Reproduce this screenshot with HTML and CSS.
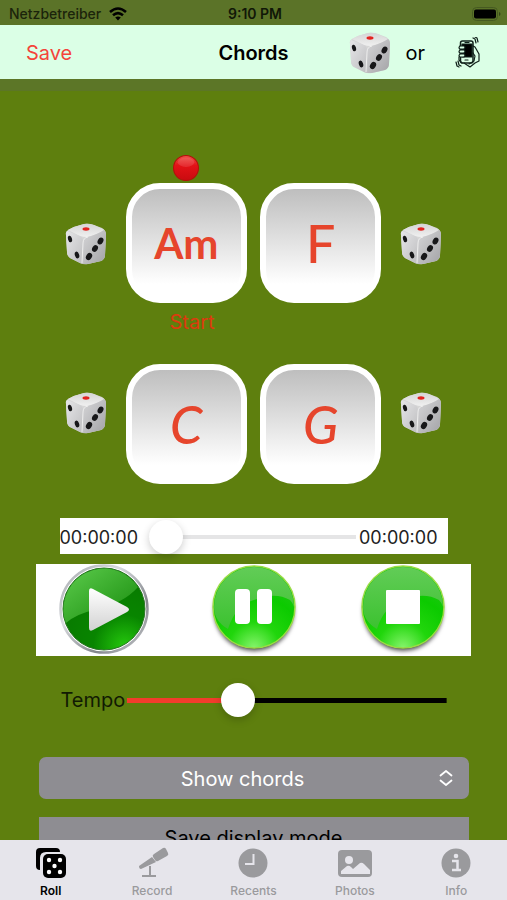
FILE: index.html
```html
<!DOCTYPE html>
<html lang="en">
<head>
<meta charset="utf-8">
<meta name="viewport" content="width=device-width, initial-scale=1">
<title>Chords</title>
<link rel="stylesheet" href="styles.css">
</head>
<body>
<svg class="defs" aria-hidden="true">
  <defs>
    <linearGradient id="dieTop" x1="0" y1="0" x2="0" y2="1"><stop offset="0" stop-color="#d4d4d4"/><stop offset="1" stop-color="#f0f0f0"/></linearGradient>
    <linearGradient id="dieLeft" x1="0" y1="0" x2="1" y2="1"><stop offset="0" stop-color="#e6e6e8"/><stop offset="1" stop-color="#bcbcbe"/></linearGradient>
    <linearGradient id="dieRight" x1="0" y1="0" x2="1" y2="1"><stop offset="0" stop-color="#d6d6d8"/><stop offset="1" stop-color="#a3a3a6"/></linearGradient>
    <linearGradient id="record" x1="0" y1="0" x2="0" y2="1"><stop offset="0" stop-color="#ee4f48"/><stop offset=".4" stop-color="#e31217"/><stop offset="1" stop-color="#c90b10"/></linearGradient>
    <linearGradient id="ring" x1="0" y1="0" x2="1" y2="1"><stop offset="0" stop-color="#a2a5aa"/><stop offset=".35" stop-color="#d9dbdf"/><stop offset=".7" stop-color="#83868c"/><stop offset="1" stop-color="#cfd1d4"/></linearGradient>
    <radialGradient id="playFill" cx=".75" cy=".95" r=".95"><stop offset="0" stop-color="#25c70d"/><stop offset=".4" stop-color="#088500"/><stop offset="1" stop-color="#087600"/></radialGradient>
    <linearGradient id="playGloss" x1="0" y1="0" x2="1" y2="1"><stop offset="0" stop-color="#5dcc4d"/><stop offset="1" stop-color="#168a0b"/></linearGradient>
    <linearGradient id="arrow" x1="0" y1="0" x2="0" y2="1"><stop offset="0" stop-color="#fff"/><stop offset="1" stop-color="#d2d2d2"/></linearGradient>
    <radialGradient id="greenFill" cx=".5" cy="1" r=".9"><stop offset="0" stop-color="#86f46c"/><stop offset=".35" stop-color="#21d60c"/><stop offset=".7" stop-color="#0cca00"/><stop offset="1" stop-color="#20c816"/></radialGradient>
    <linearGradient id="greenGloss" x1="0" y1="0" x2="0" y2="1"><stop offset="0" stop-color="#62cc57"/><stop offset="1" stop-color="#3cc230"/></linearGradient>
  </defs>
  <symbol id="die" viewBox="0 0 42 42">
    <path d="M3 7Q10 3 19 1Q23 0 29 2L37 5Q41 7 41 12L40 32Q40 36 36 38L23 41Q19 42 15 40L5 35Q2 33 2 29L1 12Q0 9 3 7Z" fill="#d6d6d6"/>
    <path d="M3 7Q10 3 19 1Q23 0 29 2L39 7Q34 11 22 14Q18 14 15 13Z" fill="url(#dieTop)"/>
    <path d="M2 8L15 13Q18 14 18 19L19 41Q16 41 13 39L5 35Q2 33 2 29L1 12Q1 9 2 8Z" fill="url(#dieLeft)"/>
    <path d="M39 7Q41 8 41 12L40 32Q40 36 36 38L23 41H19L18 20Q18 15 23 14Q33 11 39 7Z" fill="url(#dieRight)"/>
    <path d="M17 40L18 20Q18 15 23 14" fill="none" stroke="#eee" stroke-width="1"/>
    <ellipse cx="21" cy="6" rx="3.5" ry="1.7" fill="#e3231f"/>
    <g fill="#171719"><ellipse cx="5" cy="16" rx="2" ry="3.3" transform="rotate(-15 5 16)"/><ellipse cx="12" cy="32" rx="2.1" ry="3.5" transform="rotate(-18 12 32)"/><ellipse cx="35.5" cy="18" rx="2.7" ry="3.7" transform="rotate(28 35.5 18)"/><ellipse cx="30" cy="25.5" rx="2.7" ry="3.6" transform="rotate(32 30 25.5)"/><ellipse cx="24" cy="33.5" rx="2.8" ry="3.8" transform="rotate(32 24 33.5)"/></g>
  </symbol>
</svg>

<div class="status">
  <span class="carrier">Netzbetreiber
    <svg width="18" height="14" viewBox="0 0 18 14" fill="none" stroke="#000" stroke-width="2.6"><path d="M1 5Q9-2 17 5M4 8.300Q9 4 14 8.300"/><path d="M6.200 10.500Q9 8.500 11.800 10.500L9 13.500Z" fill="#000" stroke="none"/></svg>
  </span>
  <time>9:10 PM</time>
  <svg class="battery" width="29" height="14" viewBox="0 0 29 14"><rect x=".5" y=".5" width="25" height="13" rx="4" fill="none" stroke="#465a21"/><rect x="2" y="2.500" width="22" height="9" rx="2" fill="#000"/><path d="M27 5v4q1.500-.5 1.500-2T27 5Z" fill="#354618"/></svg>
</div>

<header class="nav">
  <button class="save">Save</button>
  <h1>Chords</h1>
  <div class="nav-actions">
    <button aria-label="Roll all"><svg width="42" height="42"><use href="#die"/></svg></button>
    <span>or</span>
    <button class="shake" aria-label="Shake to roll">
      <svg width="26" height="32" viewBox="0 0 26 32" fill="none" stroke="#10201a" stroke-width="1.200" stroke-linecap="round" stroke-linejoin="round"><rect x="5.500" y="4" width="12.500" height="22" rx="2" stroke-width="1.500"/><path d="M7 7h10v13H7Z" fill="#000"/><path d="M10 5.500h4M10 23h3"/><path d="M18 9l2 1 4 7v7l-4 2-5 4-6-4M18 16l2 3-1 5-5 3"/><path d="M5 9h4q2 1 0 3H5q-2-1 0-3M5 13h4q2 1 0 3H5q-2-1 0-3M5 17h4q2 1 0 3H5q-2-1 0-3" fill="#dbffe6"/><path d="M4 20v3l3 3"/><path d="M18 1l2 1 1 4M20 0l2 1 1 4M1 25l1 4 2 1M3 24l1 4 2 1"/></svg>
    </button>
  </div>
</header>

<main>
  <section class="pads" aria-label="Chord pads">
    <svg class="marker" viewBox="0 0 25 25" aria-label="Current chord"><circle cx="12.500" cy="12.500" r="12" fill="url(#record)" stroke="#b2100b"/><ellipse cx="12.500" cy="7" rx="8" ry="4.500" fill="#fff" opacity=".12"/></svg>
    <div class="pad-row">
      <button class="roll" aria-label="Roll first chord"><svg viewBox="0 0 42 42"><use href="#die"/></svg></button>
      <button class="pad minor">Am</button>
      <button class="pad">F</button>
      <button class="roll" aria-label="Roll second chord"><svg viewBox="0 0 42 42"><use href="#die"/></svg></button>
    </div>
    <p class="start">Start</p>
    <div class="pad-row lower">
      <button class="roll" aria-label="Roll third chord"><svg viewBox="0 0 42 42"><use href="#die"/></svg></button>
      <button class="pad script">C</button>
      <button class="pad script">G</button>
      <button class="roll" aria-label="Roll fourth chord"><svg viewBox="0 0 42 42"><use href="#die"/></svg></button>
    </div>
  </section>

  <div class="timeline">
    <span>00:00:00</span>
    <input type="range" min="0" max="100" value="0" aria-label="Playback position">
    <span>00:00:00</span>
  </div>

  <div class="player">
    <button aria-label="Play">
      <svg width="92" height="92" viewBox="0 0 92 92"><circle cx="46" cy="45" r="43.500" fill="#fff" stroke="url(#ring)" stroke-width="2.500"/><circle cx="46" cy="45" r="41" fill="url(#playFill)" stroke="#2a7425"/><path d="M5.500 45A40.500 40.500 0 0 1 80 23Q65 40 36 46Q18 50 8 59Q5 52 5.500 45Z" fill="url(#playGloss)"/><path d="M31 27q0-4 4-2L69 43q4 2.500 0 5L35 66q-4 2-4-2Z" fill="url(#arrow)"/></svg>
    </button>
    <button aria-label="Pause">
      <svg width="92" height="92" viewBox="0 0 92 92"><circle class="shade" cx="46" cy="45" r="40"/><circle cx="46" cy="43" r="41" fill="url(#greenFill)" stroke="#9bdc45" stroke-width="1.500"/><path d="M6 43a40 40 0 0 1 80 0Q85 39 82 36Q68 28 49 35Q27 41 20 65Q6 57 6 43Z" fill="url(#greenGloss)"/><rect x="27" y="25" width="15" height="35" rx="4" fill="#fff"/><rect x="49" y="25" width="15" height="35" rx="4" fill="#fff"/></svg>
    </button>
    <button aria-label="Stop">
      <svg width="92" height="92" viewBox="0 0 92 92"><circle class="shade" cx="46" cy="45" r="40"/><circle cx="46" cy="43" r="41" fill="url(#greenFill)" stroke="#9bdc45" stroke-width="1.500"/><path d="M6 43a40 40 0 0 1 80 0Q85 39 82 36Q68 28 49 35Q27 41 20 65Q6 57 6 43Z" fill="url(#greenGloss)"/><rect x="29" y="26" width="34" height="34" rx="1" fill="#fff"/></svg>
    </button>
  </div>

  <div class="tempo">
    <label for="tempo">Tempo</label>
    <input id="tempo" type="range" min="0" max="100" value="33">
  </div>

  <div class="display">
    <select aria-label="Display mode"><option>Show chords</option></select>
    <svg width="14" height="18" viewBox="0 0 14 18" fill="none" stroke="#fff" stroke-width="1.800" stroke-linecap="round" stroke-linejoin="round"><path d="M1.500 6.500L7 2l5.500 4.500M1.500 11.500L7 16l5.500-4.500"/></svg>
  </div>
  <button class="save-mode">Save display mode</button>
</main>

<nav class="tabs" aria-label="Sections">
  <a href="#roll" class="active" aria-current="page">
    <svg viewBox="0 0 34 34"><path d="M6 2h16q4 0 4 4H12q-6 0-6 6v12q-4 0-4-4V6q0-4 4-4Z" fill="currentColor"/><rect x="9" y="8" width="23" height="24" rx="5" fill="currentColor"/><g fill="#fff"><circle cx="15" cy="14" r="2.200"/><circle cx="26" cy="14" r="2.200"/><circle cx="20.500" cy="20" r="2.200"/><circle cx="15" cy="26" r="2.200"/><circle cx="26" cy="26" r="2.200"/></g></svg>
    Roll
  </a>
  <a href="#record">
    <svg viewBox="0 0 34 34"><path d="M19 8l9-6q2-1 3 1l2 4q1 2-1 3l-9 5q-2 1-3-1l-2-3q-1-2 1-3ZM17 11l4 5L6 23q-2 0-2-3ZM14 20h2v9h5v2H7v-2h7Z" fill="currentColor"/></svg>
    Record
  </a>
  <a href="#recents">
    <svg viewBox="0 0 34 34"><circle cx="17" cy="17" r="14.500" fill="currentColor"/><path d="M17.500 8v10H9" fill="none" stroke="#e6e5eb" stroke-width="2"/></svg>
    Recents
  </a>
  <a href="#photos">
    <svg viewBox="0 0 34 34"><rect width="34" height="27" y="4" rx="4" fill="currentColor"/><circle cx="11" cy="14" r="4" fill="#e6e5eb"/><path d="M3 28v-3l6-5q2-1 4 1l2 2 7-6q2-1 4 1l6 6v4Z" fill="#e6e5eb"/></svg>
    Photos
  </a>
  <a href="#info">
    <svg viewBox="0 0 34 34"><circle cx="17" cy="17" r="14.500" fill="currentColor"/><circle cx="17" cy="10" r="2.300" fill="#e6e5eb"/><path d="M13 15h5.500v9H22M13 24h6" fill="none" stroke="#e6e5eb" stroke-width="2.500"/></svg>
    Info
  </a>
</nav>
</body>
</html>
```
FILE: styles.css
```css
* { box-sizing: border-box; }

body {
  margin: 0;
  height: 100vh;
  display: flex;
  flex-direction: column;
  overflow: hidden;
  background: #5e7f0e;
  color: #000;
  font-family: Inter, "Liberation Sans", sans-serif;
}

button, select, input { font: inherit; color: inherit; }
button { border: 0; padding: 0; background: none; }
svg { display: block; flex: none; }
.defs { position: absolute; width: 0; height: 0; }

.status {
  display: grid;
  grid-template-columns: 1fr auto 1fr;
  align-items: center;
  flex: none;
  height: 25px;
  padding: 2px 6px 0 9px;
  background: #5b7328;
  font-size: 14px;
}
.carrier { display: flex; align-items: center; gap: 8px; color: #1b240b; font-weight: 500; }
.status time { font-weight: 600; color: #111707; }
.battery { justify-self: end; }

.nav {
  display: grid;
  grid-template-columns: 1fr auto 1fr;
  align-items: center;
  flex: none;
  height: 54px;
  padding: 1px 26px 0;
  background: #dbffe6;
}
.nav h1 { margin: 0; font-size: 20px; font-weight: 600; }
.save { justify-self: start; color: #f4443a; font-size: 20px; }
.nav-actions { display: flex; align-items: center; justify-self: end; gap: 14px; font-size: 20px; }
.shake { margin-left: 16px; }

main {
  flex: 1;
  min-height: 0;
  overflow: hidden;
  display: flex;
  flex-direction: column;
  align-items: center;
  border-top: 12px solid #5c7627;
}
main > * { flex: none; }

.pads { margin-top: 64px; width: 378px; }
.marker { width: 26px; height: 26px; margin: 0 0 2px 108px; }
.pad-row {
  display: grid;
  grid-template-columns: 48px 121px 121px 48px;
  justify-content: space-between;
  align-items: center;
}
.roll { padding-top: 2px; }
.roll svg { width: 42px; height: 42px; }
.roll:last-child svg { margin-left: auto; }
.lower .roll { padding-bottom: 24px; }
.pad {
  height: 120px;
  border: 6px solid #fff;
  border-radius: 34px;
  background: linear-gradient(#bebebe, #fff 88%);
  color: #e6452c;
  font-family: "Chalkboard SE", Lato, sans-serif;
  font-size: 52px;
  font-weight: 500;
  line-height: 60px;
}
.minor { font-size: 42px; font-weight: 700; }
.script { font-family: "Bradley Hand", Lato, sans-serif; font-style: italic; }
.start {
  width: 121px;
  margin: 6px 0 0 67px;
  height: 55px;
  line-height: 26px;
  text-align: center;
  color: #dc3b0d;
  font-size: 20px;
}

input[type="range"] {
  appearance: none;
  flex: 1;
  min-width: 0;
  height: 34px;
  margin: 0;
  background: linear-gradient(#e5e5e6, #e5e5e6) center / 100% 4px no-repeat;
}
input[type="range"]::-webkit-slider-thumb {
  appearance: none;
  width: 34px;
  height: 34px;
  border-radius: 50%;
  background: #fff;
  box-shadow: 0 3px 8px rgba(0, 0, 0, .2);
}

.timeline {
  display: flex;
  align-items: center;
  width: calc(100% - 119px);
  height: 36px;
  margin-top: 34px;
  padding: 2px 10px 0 0;
  background: #fff;
  color: #222;
  font-size: 18px;
}
.timeline input { margin: 0 3px 0 11px; }

.player {
  display: flex;
  justify-content: space-between;
  width: calc(100% - 72px);
  height: 92px;
  margin-top: 10px;
  padding: 0 22px;
  background: #fff;
}
.shade { fill: #555; filter: drop-shadow(0 2px 2px #555); }

.tempo {
  display: flex;
  align-items: center;
  gap: 2px;
  width: calc(100% - 121px);
  height: 34px;
  margin-top: 27px;
  font-size: 20px;
}
.tempo label { color: #111a03; }
.tempo input[type="range"] {
  background: linear-gradient(to right, #f23c2c 35%, #000 35%) center / 100% 5px no-repeat;
}

.display {
  display: grid;
  align-items: center;
  width: calc(100% - 77px);
  height: 42px;
  margin-top: 40px;
}
.display > * { grid-area: 1 / 1; }
.display select {
  appearance: none;
  width: 100%;
  height: 100%;
  padding: 2px 22px 0 0;
  border: 0;
  border-radius: 7px;
  background: #8e8d92;
  color: #fff;
  font-size: 20px;
  text-align: center;
  text-align-last: center;
}
.display svg { justify-self: end; margin-right: 16px; pointer-events: none; }
.save-mode {
  width: calc(100% - 77px);
  height: 42px;
  margin-top: 18px;
  background: #8e8d92;
  font-size: 20px;
}

.tabs {
  display: grid;
  grid-template-columns: repeat(5, 1fr);
  flex: none;
  height: 60px;
  padding-top: 6px;
  background: #e6e5eb;
}
.tabs a {
  display: flex;
  flex-direction: column;
  align-items: center;
  gap: 4px;
  color: #9a9a9d;
  font-size: 12px;
  font-weight: 500;
  line-height: 14px;
  text-decoration: none;
}
.tabs svg { width: 34px; height: 34px; }
.tabs .active { color: #000; font-weight: 600; }
```
